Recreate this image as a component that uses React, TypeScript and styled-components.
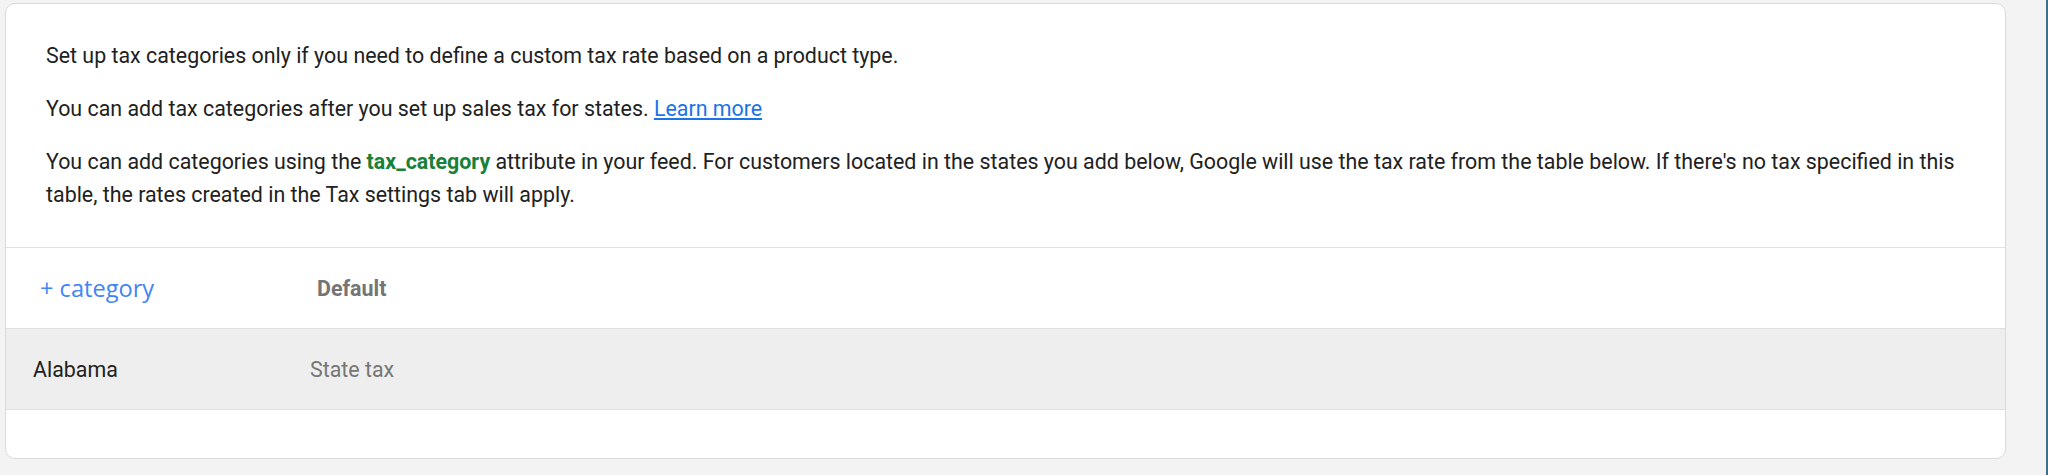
import React from "react";
import styled, { createGlobalStyle } from "styled-components";

const Global = createGlobalStyle`
  html, body {
    margin: 0;
    padding: 0;
    background: #f3f3f3;
  }
  body {
    font-family: Roboto, "Noto Sans", Arial, sans-serif;
    -webkit-font-smoothing: antialiased;
  }
`;

const Page = styled.div`
  display: flex;
  width: 2048px;
  height: 475px;
  box-sizing: border-box;
  padding: 3px 0 0 5px;
`;

const Card = styled.section`
  width: 2001px;
  height: 456px;
  box-sizing: border-box;
  background: #ffffff;
  border: 1px solid #dadada;
  border-radius: 10px;
  overflow: hidden;
  display: flex;
  flex-direction: column;
`;

const Edge = styled.div`
  margin-left: auto;
  width: 2px;
  align-self: stretch;
  margin-top: -3px;
  background: #3f6f86;
`;

const Intro = styled.div`
  padding: 35px 40px 36px 40px;
  border-bottom: 1px solid #e0e0e0;
`;

const Para = styled.p`
  margin: 0 0 20px 0;
  font-size: 21.4px;
  line-height: 33px;
  color: #212121;
  &:last-child {
    margin-bottom: 0;
  }
`;

const Attr = styled.span`
  color: #188038;
  font-weight: 700;
`;

const Link = styled.a`
  color: #1a73e8;
  text-decoration: underline;
  cursor: pointer;
`;

const Row = styled.div<{ $shaded?: boolean; $h: number }>`
  display: grid;
  grid-template-columns: 277px 1fr;
  align-items: center;
  height: ${(p) => p.$h}px;
  box-sizing: border-box;
  background: ${(p) => (p.$shaded ? "#eeeeee" : "#ffffff")};
  border-bottom: 1px solid #e0e0e0;
`;

const Cell = styled.div<{ $pad: number }>`
  padding-left: ${(p) => p.$pad}px;
`;

const AddCategory = styled.button`
  border: 0;
  background: none;
  padding: 0;
  font-family: "Open Sans", Roboto, sans-serif;
  font-size: 23.6px;
  font-weight: 500;
  color: #4285f4;
  cursor: pointer;
`;

const HeaderLabel = styled.span`
  font-size: 21.4px;
  font-weight: 700;
  color: #757575;
`;

const StateName = styled.span`
  font-size: 21.4px;
  color: #212121;
`;

const TaxLabel = styled.span`
  font-size: 21.4px;
  color: #757575;
`;

export default function App() {
  return (
    <>
      <Global />
      <Page>
        <Card>
          <Intro>
            <Para>
              Set up tax categories only if you need to define a custom tax rate based on a product type.
            </Para>
            <Para>
              You can add tax categories after you set up sales tax for states. <Link>Learn more</Link>
            </Para>
            <Para>
              You can add categories using the <Attr>tax_category</Attr> attribute in your feed. For customers
              located in the states you add below, Google will use the tax rate from the table below. If there's no
              tax specified in this table, the rates created in the Tax settings tab will apply.
            </Para>
          </Intro>
          <Row $h={81}>
            <Cell $pad={34}>
              <AddCategory>+ category</AddCategory>
            </Cell>
            <Cell $pad={34}>
              <HeaderLabel>Default</HeaderLabel>
            </Cell>
          </Row>
          <Row $shaded $h={81}>
            <Cell $pad={27}>
              <StateName>Alabama</StateName>
            </Cell>
            <Cell $pad={27}>
              <TaxLabel>State tax</TaxLabel>
            </Cell>
          </Row>
        </Card>
        <Edge />
      </Page>
    </>
  );
}
